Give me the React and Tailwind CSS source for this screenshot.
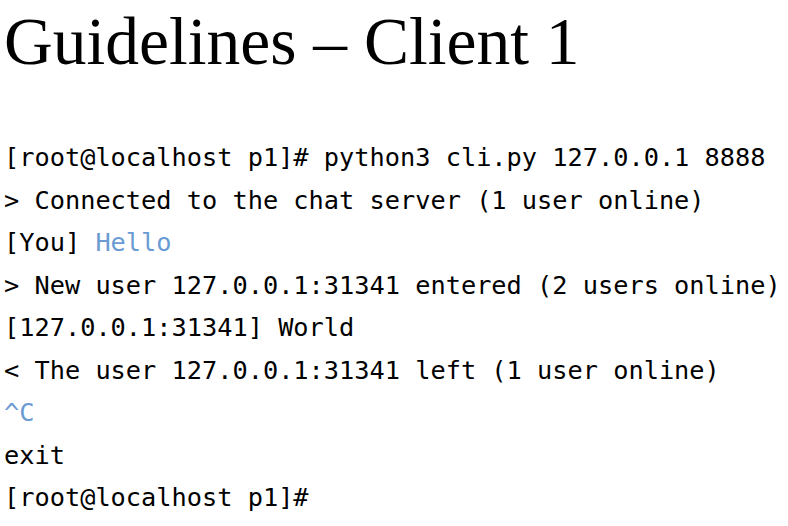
const lines = [
  [{ t: "[root@localhost p1]# python3 cli.py 127.0.0.1 8888" }],
  [{ t: "> Connected to the chat server (1 user online)" }],
  [{ t: "[You] " }, { t: "Hello", blue: true }],
  [{ t: "> New user 127.0.0.1:31341 entered (2 users online)" }],
  [{ t: "[127.0.0.1:31341] World" }],
  [{ t: "< The user 127.0.0.1:31341 left (1 user online)" }],
  [{ t: "^C", blue: true }],
  [{ t: "exit" }],
  [{ t: "[root@localhost p1]#" }],
];

export default function App() {
  return (
    <div className="w-[788px] h-[526px] bg-white overflow-hidden">
      <h1 className="pl-[4px] pt-[2px] font-['Liberation_Serif',serif] text-[67.5px] leading-[80px] text-black">
        Guidelines – Client 1
      </h1>
      <div className="mt-[55px] pl-[4px] font-['DejaVu_Sans_Mono',monospace] text-[25.3px] leading-[42.5px] text-black whitespace-pre">
        {lines.map((line, i) => (
          <div key={i}>
            {line.map((s, j) => (
              <span key={j} className={s.blue ? "text-[#6a9bd3]" : ""}>
                {s.t}
              </span>
            ))}
          </div>
        ))}
      </div>
    </div>
  );
}
